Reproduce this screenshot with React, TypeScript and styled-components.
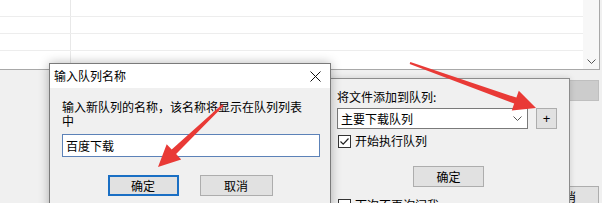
import React from 'react'
import styled, { createGlobalStyle } from 'styled-components'

const GlobalStyle = createGlobalStyle`
  html, body {
    margin: 0;
    padding: 0;
    background: #f0f0f0;
  }
  body {
    font-family: "Noto Sans CJK SC", "Noto Sans", "Liberation Sans", sans-serif;
    font-size: 12px;
    color: #000;
  }
`

const Desktop = styled.div`
  position: relative;
  width: 602px;
  height: 203px;
  overflow: hidden;
  background: #f0f0f0;
`

/* ---------- background window ---------- */

const ListView = styled.div`
  display: flex;
  width: 599px;
  height: 69px;
  background: #fff;
  border-right: 1px solid #a8a8a8;
  border-bottom: 1px solid #a8a8a8;
`

const ListBody = styled.div`
  flex: 1;
  display: flex;
  flex-direction: column;
`

const ListRow = styled.div`
  display: grid;
  grid-template-columns: 71px 1fr;
  height: 16px;
  border-bottom: 1px solid #ededed;
`

const ListFill = styled.div`
  flex: 1;
  display: grid;
  grid-template-columns: 71px 1fr;
`

const Cell = styled.div<{ $first?: boolean }>`
  border-right: ${(p) => (p.$first ? '1px solid #e8e8e8' : 'none')};
`

const ScrollBar = styled.div`
  width: 16px;
  background: #f7f7f7;
  display: flex;
  flex-direction: column;
  justify-content: flex-end;
  align-items: center;
  padding-bottom: 4px;
`

const LowerArea = styled.div`
  display: flex;
  flex-direction: column;
  align-items: flex-end;
  padding: 10px 3px 0 0;
  gap: 85px;
`

const BgButton = styled.div<{ $disabled?: boolean }>`
  box-sizing: border-box;
  width: 70px;
  height: 21px;
  display: flex;
  align-items: center;
  justify-content: center;
  line-height: 14px;
  background: ${(p) => (p.$disabled ? '#cccccc' : '#e1e1e1')};
  border: 1px solid ${(p) => (p.$disabled ? '#bfbfbf' : '#adadad')};
  color: #000;
`

/* ---------- dialogs ---------- */

const Window = styled.div<{ $left: number; $top: number; $width: number; $height: number }>`
  position: absolute;
  left: ${(p) => p.$left}px;
  top: ${(p) => p.$top}px;
  width: ${(p) => p.$width}px;
  height: ${(p) => p.$height}px;
  box-sizing: border-box;
  background: #f0f0f0;
  display: flex;
  flex-direction: column;
`

const NameDialog = styled(Window)`
  border: 1px solid #7a7a7a;
  box-shadow: 0 0 10px rgba(0, 0, 0, 0.28);
  z-index: 2;
`

const QueuePanel = styled(Window)`
  border: 1px solid #8c8c8c;
  box-shadow: 0 0 6px rgba(0, 0, 0, 0.15);
  z-index: 1;
  padding: 10px 0 0 7px;
`

const TitleBar = styled.div`
  height: 24px;
  background: #fff;
  display: flex;
  align-items: center;
  justify-content: space-between;
  padding: 0 9px 0 4px;
  line-height: 16px;
`

const CloseIcon = () => (
  <svg width="11" height="11" viewBox="0 0 11 11">
    <path d="M0.5 0.5 L10.5 10.5 M10.5 0.5 L0.5 10.5" stroke="#111" strokeWidth="1" />
  </svg>
)

const DialogBody = styled.div`
  padding: 12px 0 0 12px;
  display: flex;
  flex-direction: column;
`

const Prompt = styled.div`
  width: 245px;
  line-height: 14px;
`

const TextInput = styled.div`
  box-sizing: border-box;
  margin-top: 6px;
  width: 258px;
  height: 23px;
  border: 1px solid #5c82b8;
  background: #fff;
  display: flex;
  align-items: center;
  padding-left: 3px;
  line-height: 14px;
`

const ButtonRow = styled.div`
  display: flex;
  justify-content: center;
  gap: 21px;
  margin: 18px 0 0 -12px;
`

const Button = styled.div<{ $w: number; $default?: boolean }>`
  box-sizing: border-box;
  width: ${(p) => p.$w}px;
  height: 21px;
  display: flex;
  align-items: center;
  justify-content: center;
  line-height: 14px;
  background: #e1e1e1;
  border: ${(p) => (p.$default ? '2px solid #1a6fc4' : '1px solid #adadad')};
`

const Label = styled.div`
  line-height: 15px;
`

const ComboRow = styled.div`
  display: flex;
  align-items: center;
  gap: 8px;
  margin-top: 4px;
`

const Combo = styled.div`
  box-sizing: border-box;
  width: 191px;
  height: 21px;
  background: #fff;
  border: 1px solid #7a7a7a;
  display: flex;
  align-items: center;
  justify-content: space-between;
  padding: 0 5px 0 3px;
  line-height: 14px;
`

const ChevronDown = () => (
  <svg width="9" height="6" viewBox="0 0 9 6">
    <polyline points="0.5,0.5 4.5,4.5 8.5,0.5" fill="none" stroke="#555" strokeWidth="1" />
  </svg>
)

const SquareButton = styled.div`
  box-sizing: border-box;
  width: 21px;
  height: 21px;
  background: #e1e1e1;
  border: 1px solid #adadad;
  display: flex;
  align-items: center;
  justify-content: center;
  font-family: "Liberation Sans", sans-serif;
  font-size: 13px;
  line-height: 13px;
`

const CheckRow = styled.div<{ $mt: number }>`
  display: flex;
  align-items: center;
  gap: 4px;
  margin-top: ${(p) => p.$mt}px;
  padding-left: 1px;
  line-height: 14px;
`

const Box = styled.div`
  box-sizing: border-box;
  width: 13px;
  height: 13px;
  border: 1px solid #333;
  background: #fff;
  display: flex;
  align-items: center;
  justify-content: center;
`

const Check: React.FC<{ checked?: boolean }> = ({ checked }) => (
  <Box>
    {checked && (
      <svg width="11" height="11" viewBox="0 0 11 11">
        <polyline points="1.5,5.5 4.2,8.2 9.5,2.5" fill="none" stroke="#222" strokeWidth="1.2" />
      </svg>
    )}
  </Box>
)

const PanelButtonRow = styled.div`
  display: flex;
  justify-content: center;
  margin: 18px 0 0 -9px;
`

const Overlay = styled.svg`
  position: absolute;
  left: 0;
  top: 0;
  z-index: 5;
  pointer-events: none;
`

// tapered arrow: thin at the tail, wide head at the tip
const arrowPoints = (tx: number, ty: number, hx: number, hy: number) => {
  const dx = hx - tx
  const dy = hy - ty
  const len = Math.hypot(dx, dy)
  const ux = dx / len
  const uy = dy / len
  const nx = -uy
  const ny = ux
  const head = 22
  const bx = hx - ux * head
  const by = hy - uy * head
  const p = (x: number, y: number, w: number) => `${(x + nx * w).toFixed(1)},${(y + ny * w).toFixed(1)}`
  return [
    p(tx, ty, -1), p(bx, by, -3.2), p(bx, by, -10.5),
    `${hx},${hy}`,
    p(bx, by, 10.5), p(bx, by, 3.2), p(tx, ty, 1),
  ].join(' ')
}

const rows = [0, 1, 2]

export default function App() {
  return (
    <>
      <GlobalStyle />
      <Desktop>
        <ListView>
          <ListBody>
            {rows.map((r) => (
              <ListRow key={r}>
                <Cell $first />
                <Cell />
              </ListRow>
            ))}
            <ListFill>
              <Cell $first />
              <Cell />
            </ListFill>
          </ListBody>
          <ScrollBar>
            <ChevronDown />
          </ScrollBar>
        </ListView>

        <LowerArea>
          <BgButton $disabled />
          <BgButton>取消</BgButton>
        </LowerArea>

        <QueuePanel $left={329} $top={78} $width={241} $height={140}>
          <Label>将文件添加到队列:</Label>
          <ComboRow>
            <Combo>
              <span>主要下载队列</span>
              <ChevronDown />
            </Combo>
            <SquareButton>+</SquareButton>
          </ComboRow>
          <CheckRow $mt={5}>
            <Check checked />
            <span>开始执行队列</span>
          </CheckRow>
          <PanelButtonRow>
            <Button $w={71}>确定</Button>
          </PanelButtonRow>
          <CheckRow $mt={11}>
            <Check />
            <span>下次不再询问我</span>
          </CheckRow>
        </QueuePanel>

        <NameDialog $left={49} $top={63} $width={282} $height={160}>
          <TitleBar>
            <span>输入队列名称</span>
            <CloseIcon />
          </TitleBar>
          <DialogBody>
            <Prompt>输入新队列的名称，该名称将显示在队列列表中</Prompt>
            <TextInput>百度下载</TextInput>
            <ButtonRow>
              <Button $w={71} $default>确定</Button>
              <Button $w={73}>取消</Button>
            </ButtonRow>
          </DialogBody>
        </NameDialog>

        <Overlay width="602" height="203" viewBox="0 0 602 203">
          <polygon points={arrowPoints(410, 63, 536, 108)} fill="#e93a36" />
          <polygon points={arrowPoints(223, 105, 158, 167)} fill="#e93a36" />
        </Overlay>
      </Desktop>
    </>
  )
}
